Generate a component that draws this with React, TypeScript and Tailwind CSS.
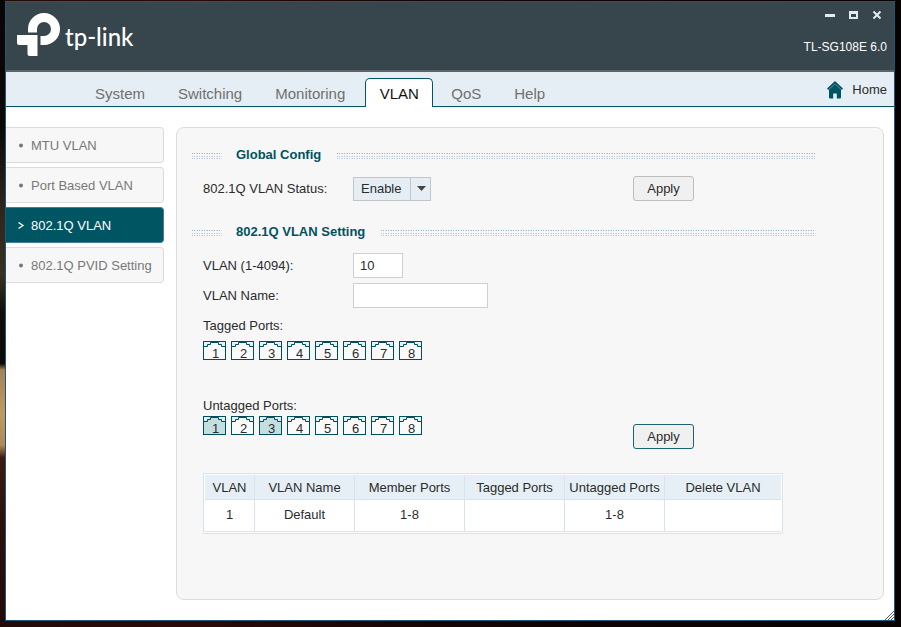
import { useState } from 'react';

const navItems = ['System', 'Switching', 'Monitoring', 'VLAN', 'QoS', 'Help'];
const sideItems = ['MTU VLAN', 'Port Based VLAN', '802.1Q VLAN', '802.1Q PVID Setting'];
const ports = [1, 2, 3, 4, 5, 6, 7, 8];

function Logo() {
  return (
    <div className="flex items-center gap-1 pl-[11px] text-white">
      <svg width="44" height="44" viewBox="17 13 44 44" fill="currentColor" aria-hidden="true">
        <path d="M28 32.500V29A16 16 0 0 1 60 29A16 16 0 0 1 44 45H40.500V36H44A7 7 0 0 0 51 29A7 7 0 0 0 37 29V32.500Z" />
        <path d="M17 35H37.500V56H29.500Q27.500 56 27.500 54V45H19Q17 45 17 43Z" />
      </svg>
      <span className="pt-1 font-[Lato] text-[24px] leading-8 font-medium">tp-link</span>
    </div>
  );
}

function WindowControls() {
  return (
    <div className="flex h-[26px] items-center gap-[13px] pr-1 text-[#e3ebf2]">
      <button type="button" aria-label="Minimize">
        <svg width="10" height="10" viewBox="0 0 10 10" className="block">
          <rect y="4" width="10" height="3" fill="currentColor" />
        </svg>
      </button>
      <button type="button" aria-label="Maximize">
        <svg width="10" height="10" viewBox="0 0 10 10" className="block" fill="currentColor">
          <path fillRule="evenodd" d="M1 1H10V9H1ZM3 4V7H8V4Z" />
        </svg>
      </button>
      <button type="button" aria-label="Close">
        <svg width="12" height="10" viewBox="0 0 12 10" className="block" stroke="currentColor" strokeWidth="2">
          <path d="M2.500 1.500L9.500 8.500M9.500 1.500L2.500 8.500" />
        </svg>
      </button>
    </div>
  );
}

function HomeIcon() {
  return (
    <svg width="16" height="18" viewBox="0 0 16 18" fill="#005563" aria-hidden="true">
      <path d="M8 0L16 7.500L14.700 9L8 3.200L1.300 9L0 7.500Z" />
      <path d="M8 3L14 8.500V16.500Q14 17.500 13 17.500H9.800V12.500H6.200V17.500H3Q2 17.500 2 16.500V8.500Z" />
      <path d="M1.300 8.600L8 3L14.700 8.600" fill="none" stroke="#5d93a0" strokeWidth="0.600" />
    </svg>
  );
}

function DotTexture({ id, className }: { id: string; className: string }) {
  return (
    <svg className={className} height="8" aria-hidden="true">
      <defs>
        <pattern id={id} width="10" height="8" patternUnits="userSpaceOnUse">
          <g fill="#94b5d3">
            <rect y="2" width="1" height="1" />
            <rect x="2" y="2" width="1" height="1" />
            <rect x="5" y="2" width="1" height="1" />
            <rect x="7" y="2" width="1" height="1" />
          </g>
          <g fill="#b6c9dd">
            <rect y="5" width="1" height="1" />
            <rect x="2" y="5" width="1" height="1" />
            <rect x="5" y="5" width="1" height="1" />
            <rect x="7" y="5" width="1" height="1" />
            <rect y="7" width="1" height="1" />
            <rect x="2" y="7" width="1" height="1" />
            <rect x="5" y="7" width="1" height="1" />
            <rect x="7" y="7" width="1" height="1" />
          </g>
          <g fill="#d5dce5">
            <rect x="4" y="2" width="1" height="1" />
            <rect x="9" y="2" width="1" height="1" />
            <rect x="4" y="5" width="1" height="1" />
            <rect x="9" y="5" width="1" height="1" />
            <rect x="4" y="7" width="1" height="1" />
            <rect x="9" y="7" width="1" height="1" />
          </g>
        </pattern>
      </defs>
      <rect width="100%" height="8" fill={`url(#${id})`} />
    </svg>
  );
}

function SectionHeading({ id, children }: { id: string; children: string }) {
  return (
    <div className="flex h-5 max-w-[624px] items-center">
      <DotTexture id={`${id}-a`} className="w-[30px] shrink-0" />
      <h2 className="mr-4 ml-[14px] font-bold text-[#005261]">{children}</h2>
      <DotTexture id={`${id}-b`} className="w-0 flex-1" />
    </div>
  );
}

function Ports({ label, initial }: { label: string; initial: number[] }) {
  const [selected, setSelected] = useState(initial);
  const toggle = (n: number) =>
    setSelected((s) => (s.includes(n) ? s.filter((p) => p !== n) : [...s, n]));
  return (
    <div className="flex gap-[5px]" role="group" aria-label={label}>
      {ports.map((n) => {
        const on = selected.includes(n);
        return (
          <button
            key={n}
            type="button"
            aria-pressed={on}
            onClick={() => toggle(n)}
            className="relative flex h-[19px] w-[23px] items-end justify-center pl-[2px] leading-3"
          >
            <svg width="23" height="19" viewBox="0 0 23 19" className="absolute inset-0" stroke="#004d5c" aria-hidden="true">
              <rect x="0.500" y="0.500" width="22" height="18" fill={on ? '#c2e0e0' : '#fafafa'} />
              <path d="M0.500 0.500H22.500V5.500H18.500V3.500H15.500V1.500H7.500V3.500H4.500V5.500H0.500Z" fill="#e3f0f5" />
            </svg>
            <span className="relative">{n}</span>
          </button>
        );
      })}
    </div>
  );
}

const th = 'border-r border-b border-[#d9e4ea] bg-[#e5eff5] p-0 pt-[2px] font-normal last:border-r-0';
const td = 'border-r border-b border-[#d9e4ea] bg-white p-0 pb-[2px] last:border-r-0';
const field = 'h-[25px] border border-[#cfcfcf] bg-white px-[6px] outline-none';
const applyButton = 'h-[25px] w-[61px] rounded-[3px] border bg-[#f0f0f0]';

export default function App() {
  return (
    <div className="flex min-h-screen bg-[linear-gradient(to_right,#230a08,#2c0908_22%,#170405_45%,#0a0203_75%,#080203)] font-['Liberation_Sans',Arial,sans-serif] text-[13px] leading-5 text-[#2b2b2b]">
      <div className="w-[5px] bg-[linear-gradient(#080504,#0c0807_20%,#2e261c_33%,#39301f_44%,#100c09_50%,#0c0a09_58%,#a58358_59%,#c09a64_66%,#b08a57_71%,#3c1a12_73%,#2a0f0b_85%,#230a08)]" />
      <div className="flex min-w-0 flex-1 flex-col pt-px pr-[6px] pb-[6px]">
        <div className="relative flex flex-1 flex-col border border-[#1d5878] bg-white">
          <header className="flex h-[70px] justify-between border-b-2 border-[#5c6467] bg-[#37454c]">
            <div className="pt-[11px]">
              <Logo />
            </div>
            <div className="flex flex-col items-end gap-[9px] pr-[7px] text-white">
              <WindowControls />
              <span className="text-xs leading-5">TL-SG108E 6.0</span>
            </div>
          </header>

          <nav className="flex h-[35px] items-end justify-between border-b border-[#005563] bg-[#e5eef4]">
            <div className="flex items-end gap-px pl-[73px] text-[15px]">
              {navItems.map((item) =>
                item === 'VLAN' ? (
                  <a
                    key={item}
                    href="#"
                    aria-current="page"
                    className="mr-px ml-[3px] -mb-px h-[29px] w-[68px] rounded-t-[5px] border border-b-0 border-[#005563] bg-white text-center leading-[30px] text-[#111]"
                  >
                    {item}
                  </a>
                ) : (
                  <a key={item} href="#" className="h-[28px] px-4 leading-8 text-[#707070]">
                    {item}
                  </a>
                ),
              )}
            </div>
            <a href="#" className="flex items-center gap-[9px] self-center pt-[2px] pr-[7px]">
              <HomeIcon />
              Home
            </a>
          </nav>

          <div className="flex flex-1 gap-3 pt-5 pr-[10px] pb-5">
            <ul className="flex w-[158px] shrink-0 flex-col gap-1">
              {sideItems.map((item) => {
                const active = item === '802.1Q VLAN';
                return (
                  <li key={item}>
                    <a
                      href="#"
                      className={`flex h-9 items-center rounded-r-[4px] border border-l-0 pt-[2px] pl-3 ${
                        active
                          ? 'border-[#3f7f9d] bg-[#005563] text-white'
                          : 'border-[#dcdcdc] bg-[#f7f7f7] text-[#777]'
                      }`}
                    >
                      <svg width="13" height="8" viewBox="0 0 13 8" aria-hidden="true">
                        {active ? (
                          <path d="M0.500 0.500L5 3.500L0.500 6.500" fill="none" stroke="currentColor" strokeWidth="1.300" />
                        ) : (
                          <circle cx="3" cy="3.500" r="2" fill="currentColor" />
                        )}
                      </svg>
                      {item}
                    </a>
                  </li>
                );
              })}
            </ul>

            <main className="min-w-0 flex-1 rounded-[8px] border border-[#dcdcdc] bg-[#f7f7f7] pt-[17px] pl-[15px]">
              <SectionHeading id="global">Global Config</SectionHeading>
              <div className="mt-[11px] flex items-center pl-[11px]">
                <div className="flex w-[430px] items-center">
                  <label htmlFor="status" className="w-[150px]">
                    802.1Q VLAN Status:
                  </label>
                  <div className="relative h-6 w-[78px]">
                    <select
                      id="status"
                      defaultValue="Enable"
                      className="h-6 w-full appearance-none border border-[#c2c6c9] bg-[#e5eef4] pl-[7px] outline-none"
                    >
                      <option>Enable</option>
                      <option>Disable</option>
                    </select>
                    <span className="pointer-events-none absolute inset-y-0 right-0 flex w-[21px] items-center justify-center border-l border-[#c2c6c9]">
                      <svg width="9" height="5" viewBox="0 0 9 5" fill="#444" aria-hidden="true">
                        <path d="M0 0H9L4.500 5Z" />
                      </svg>
                    </span>
                  </div>
                </div>
                <button type="button" className={`${applyButton} border-[#bdbdbd]`}>
                  Apply
                </button>
              </div>

              <div className="mt-[21px]">
                <SectionHeading id="setting">802.1Q VLAN Setting</SectionHeading>
              </div>
              <div className="pl-[11px]">
                <div className="mt-[11px] flex items-center">
                  <label htmlFor="vlan-id" className="w-[150px]">
                    VLAN (1-4094):
                  </label>
                  <input id="vlan-id" type="text" defaultValue="10" className={`${field} w-[50px]`} />
                </div>
                <div className="mt-[5px] flex items-center">
                  <label htmlFor="vlan-name" className="w-[150px]">
                    VLAN Name:
                  </label>
                  <input id="vlan-name" type="text" className={`${field} w-[135px]`} />
                </div>

                <p className="mt-2 mb-[5px]">Tagged Ports:</p>
                <Ports label="Tagged Ports" initial={[]} />

                <div className="mt-9 flex items-end">
                  <div className="w-[430px] self-start">
                    <p>Untagged Ports:</p>
                    <Ports label="Untagged Ports" initial={[1, 3]} />
                  </div>
                  <button type="button" className={`${applyButton} mt-7 border-[#1a6470]`}>
                    Apply
                  </button>
                </div>

                <div className="mt-6 max-w-[580px] border border-[#d9e4ea] bg-[#fbfdfe] p-px">
                  <table className="w-full table-fixed border-separate border-spacing-0 text-center">
                    <colgroup>
                      <col className="w-[50px]" />
                      <col className="w-[100px]" />
                      <col className="w-[110px]" />
                      <col className="w-[100px]" />
                      <col className="w-[100px]" />
                      <col />
                    </colgroup>
                    <thead>
                      <tr className="h-[25px]">
                        <th className={th}>VLAN</th>
                        <th className={th}>VLAN Name</th>
                        <th className={th}>Member Ports</th>
                        <th className={th}>Tagged Ports</th>
                        <th className={th}>Untagged Ports</th>
                        <th className={th}>Delete VLAN</th>
                      </tr>
                    </thead>
                    <tbody>
                      <tr className="h-8">
                        <td className={td}>1</td>
                        <td className={td}>Default</td>
                        <td className={td}>1-8</td>
                        <td className={td} />
                        <td className={td}>1-8</td>
                        <td className={td} />
                      </tr>
                    </tbody>
                  </table>
                </div>
              </div>
            </main>
          </div>

          <svg width="9" height="9" viewBox="0 0 9 9" className="absolute right-0 bottom-0" stroke="#555" aria-hidden="true">
            <path d="M0 9L9 0M3 9L9 3M6 9L9 6" />
          </svg>
        </div>
      </div>
    </div>
  );
}
